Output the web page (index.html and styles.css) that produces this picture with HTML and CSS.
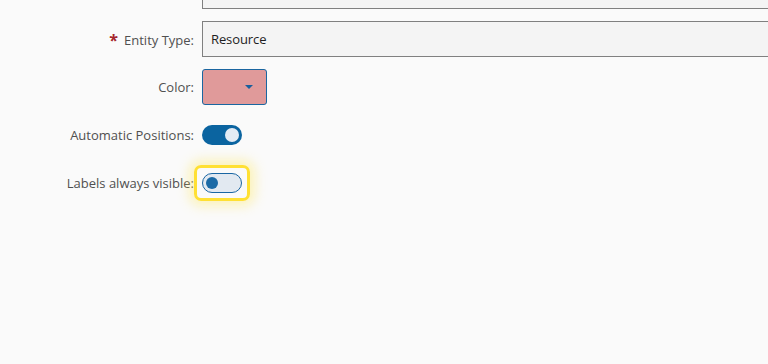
FILE: index.html
```html
<!DOCTYPE html>
<html>
<head>
<meta charset="utf-8">
<link rel="stylesheet" href="styles.css">
</head>
<body>
<div class="form">
  <div class="row">
    <label class="label"></label>
    <div class="field"><div class="input"></div></div>
  </div>
  <div class="row">
    <label class="label"><span class="req">*</span>Entity Type:</label>
    <div class="field"><div class="input">Resource</div></div>
  </div>
  <div class="row">
    <label class="label">Color:</label>
    <div class="field"><div class="color"><span class="caret"></span></div></div>
  </div>
  <div class="row">
    <label class="label">Automatic Positions:</label>
    <div class="field"><span class="toggle on"><span class="knob"></span></span></div>
  </div>
  <div class="row">
    <label class="label">Labels always visible:</label>
    <div class="field"><span class="focus-ring"><span class="toggle off"><span class="knob"></span></span></span></div>
  </div>
</div>
</body>
</html>
```
FILE: styles.css
```css
html, body {
  margin: 0;
  padding: 0;
  background: #fafafa;
  overflow: hidden;
  width: 768px;
  height: 364px;
}
body {
  font-family: "Open Sans", "Noto Sans", Arial, sans-serif;
  font-size: 13px;
}
.form {
  display: flex;
  flex-direction: column;
  gap: 12px;
  margin-top: -27px;
}
.row {
  display: grid;
  grid-template-columns: 194px 640px;
  column-gap: 8px;
  height: 36px;
  align-items: center;
}
.label {
  text-align: right;
  color: #505050;
  white-space: nowrap;
}
.req {
  color: #a4262c;
  font-size: 16px;
  font-weight: bold;
  margin-right: 6px;
  position: relative;
  top: 1px;
}
.field {
  display: flex;
  align-items: center;
  height: 36px;
}
.input {
  box-sizing: border-box;
  width: 640px;
  height: 36px;
  border: 1px solid #808080;
  background: #f4f4f4;
  color: #1e1e1e;
  padding: 0 8px;
  display: flex;
  align-items: center;
  letter-spacing: -0.1px;
}
.color {
  box-sizing: border-box;
  width: 65px;
  height: 36px;
  border: 1px solid #1a66a0;
  border-radius: 3px;
  background: #e09a9a;
  display: flex;
  align-items: center;
  justify-content: flex-end;
  padding-right: 13px;
}
.caret {
  width: 0;
  height: 0;
  border-left: 4px solid transparent;
  border-right: 4px solid transparent;
  border-top: 4px solid #1a5f9c;
}
.toggle {
  box-sizing: border-box;
  width: 40px;
  height: 20px;
  border-radius: 10px;
  display: flex;
  align-items: center;
}
.toggle.on {
  background: #0b64a0;
  justify-content: flex-end;
  padding-right: 3px;
}
.toggle.on .knob {
  width: 14px;
  height: 14px;
  border-radius: 50%;
  background: #e3ebf4;
}
.toggle.off {
  background: #e2e9f1;
  border: 1.5px solid #1a66a3;
  padding-left: 3px;
}
.toggle.off .knob {
  width: 12px;
  height: 12px;
  border-radius: 50%;
  background: #1b6aa6;
}
.focus-ring {
  display: flex;
  padding: 5px;
  margin-left: -8px;
  border: 3px solid #ffe033;
  border-radius: 7px;
  box-shadow: 0 0 12px 5px rgba(255, 232, 90, 0.4);
}
```
